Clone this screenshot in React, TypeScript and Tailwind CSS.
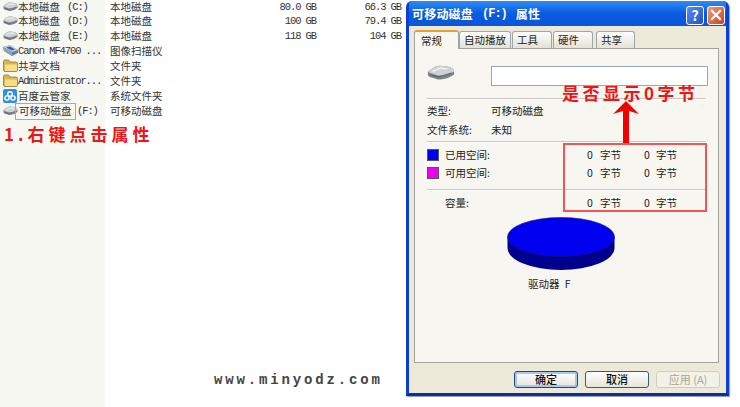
import React from "react";

const cjk = "font-['Noto_Sans_CJK_SC','Liberation_Sans',sans-serif]";
const mono = "font-['Liberation_Mono','Noto_Sans_CJK_SC',monospace]";

function DriveIcon({ w = 15, h = 10 }: { w?: number; h?: number }) {
  return (
    <svg width={w} height={h} viewBox="0 0 30 20" preserveAspectRatio="none" className="shrink-0">
      <path d="M1 8 L9 2 Q11 1 14 1 L22 2 Q29 4 29 8 L29 12 Q20 19 12 18 L3 15 Q1 14 1 12 Z" fill="#7c8186" />
      <path d="M1 8 L9 2 Q11 1 14 1 L22 2 Q29 4 29 8 Q20 14 12 13 L3 10 Z" fill="#cfd2d4" />
      <path d="M6 8 L14 4 L22 5" stroke="#f4f5f6" strokeWidth="1.5" fill="none" />
      <path d="M4 12 L12 15 L26 10" stroke="#54595d" strokeWidth="1" fill="none" />
    </svg>
  );
}

function ScannerIcon() {
  return (
    <svg width={16} height={13} viewBox="0 0 16 13" className="shrink-0">
      <path d="M0 3 L7 1 L15 6 L15 9 L9 12 L1 7 Z" fill="#5f7fa8" />
      <path d="M0 3 L7 1 L15 6 L9 8 Z" fill="#c5d3e3" />
      <path d="M3 3.5 L7 2.5 L12 5.5 L8.5 6.5 Z" fill="#3d5f96" />
      <path d="M1 7 L9 12 L9 8 L0 3 Z" fill="#8fa3bb" />
    </svg>
  );
}

function FolderIcon() {
  return (
    <svg width={15} height={13} viewBox="0 0 15 13" className="shrink-0">
      <path d="M0.5 2.5 Q0.5 1 2 1 L5.5 1 L7 3 L13 3 Q14.5 3 14.5 4.5 L14.5 11 Q14.5 12.5 13 12.5 L2 12.5 Q0.5 12.5 0.5 11 Z" fill="#d9b64e" stroke="#8f7a3a" strokeWidth="0.8" />
      <path d="M2 5.5 L14 5.5 L14 11 Q14 12 13 12 L2.5 12 Q2 12 2 11 Z" fill="#f7df8a" />
    </svg>
  );
}

function CloudIcon() {
  return (
    <svg width={14} height={14} viewBox="0 0 14 14" className="shrink-0">
      <rect width="14" height="14" rx="2" fill="#2f8fe6" />
      <circle cx="7" cy="5" r="2.3" fill="none" stroke="#fff" strokeWidth="1.4" />
      <circle cx="4" cy="9" r="2.1" fill="none" stroke="#fff" strokeWidth="1.4" />
      <circle cx="10" cy="9" r="2.1" fill="none" stroke="#fff" strokeWidth="1.4" />
    </svg>
  );
}

function Latin({ children, className = "" }: { children: React.ReactNode; className?: string }) {
  return <span className={`${mono} tracking-[-1.1px] whitespace-pre pt-[2px] ${className}`}>{children}</span>;
}

const drive = <DriveIcon />;
const rows: { icon: React.ReactNode; name: React.ReactNode; type: string; size?: string; free?: string }[] = [
  { icon: drive, name: <>本地磁盘<Latin className="ml-[7px]">(C:)</Latin></>, type: "本地磁盘", size: "80.0 GB", free: "66.3 GB" },
  { icon: drive, name: <>本地磁盘<Latin className="ml-[7px]">(D:)</Latin></>, type: "本地磁盘", size: "100 GB", free: "79.4 GB" },
  { icon: drive, name: <>本地磁盘<Latin className="ml-[7px]">(E:)</Latin></>, type: "本地磁盘", size: "118 GB", free: "104 GB" },
  { icon: <ScannerIcon />, name: <Latin>Canon MF4700 ...</Latin>, type: "图像扫描仪" },
  { icon: <FolderIcon />, name: "共享文档", type: "文件夹" },
  { icon: <FolderIcon />, name: <Latin>Administrator...</Latin>, type: "文件夹" },
  { icon: <CloudIcon />, name: "百度云管家", type: "系统文件夹" },
  {
    icon: drive,
    name: (
      <>
        <span className="border border-[#f28a80] h-[17px] w-[61px] -ml-[3px] pl-[3px] pb-[2px] mt-[2px] flex items-center shrink-0">可移动磁盘</span>
        <Latin className="ml-[1px]">(F:)</Latin>
      </>
    ),
    type: "可移动磁盘",
  },
];

function Tab({ label, width, gap = 0 }: { label: string; width: number; gap?: number }) {
  return (
    <div
      style={{ width, marginLeft: gap }}
      className="h-[17px] mt-[1px] pl-[4px] text-[10.5px] text-[#222] flex items-center bg-gradient-to-b from-[#fdfdfb] to-[#e4e1d5] border border-b-0 border-[#9aa5ae] rounded-t-[3px]"
    >
      {label}
    </div>
  );
}

function Divider({ className = "" }: { className?: string }) {
  return <div className={`h-[2px] mr-[2px] bg-[#c9c8c2] border-b border-white ${className}`} />;
}

function Bytes() {
  return (
    <div className="flex w-[90px] ml-auto text-[10.5px] text-[#222] leading-none">
      <div className="w-[57px] flex justify-start gap-[7px]">
        <span className="w-[6px] text-center">0</span>
        <span>字节</span>
      </div>
      <div className="flex gap-[6px]">
        <span className="w-[6px] text-center">0</span>
        <span>字节</span>
      </div>
    </div>
  );
}

function Usage({ color, label }: { color?: string; label: string }) {
  return (
    <div className="h-[18px] flex items-center pr-[31px]">
      <div className="w-[18px] shrink-0">
        {color && <div className={`w-[12px] h-[12px] border border-[#555] ${color}`} />}
      </div>
      <span className="text-[10.5px] text-[#222]">{label}</span>
      <Bytes />
    </div>
  );
}

function DlgButton({ label, tone }: { label: string; tone: "default" | "normal" | "disabled" }) {
  const cls =
    tone === "default"
      ? "border-[#20497a] text-[#111] font-medium bg-gradient-to-b from-white to-[#e6e4da] shadow-[inset_0_0_0_2px_#a9c8ef]"
      : tone === "normal"
      ? "border-[#3c5a70] text-[#111] font-medium bg-gradient-to-b from-white to-[#e6e4da]"
      : "border-[#cfcdc0] text-[#a8a698] bg-[#f3f1e8]";
  return (
    <div className={`w-[64px] h-[17px] rounded-[3px] border flex items-center justify-center text-[11px] ${cls}`}>
      {label}
    </div>
  );
}

export default function App() {
  return (
    <div className={`relative flex w-[740px] h-[407px] bg-white overflow-hidden ${cjk}`}>
      <div className="w-[105px] h-full bg-[#f8f8f2] shrink-0">
        {rows.map((r, i) => (
          <div key={i} className="h-[15px] flex items-center text-[10.5px] leading-[11px] text-[#333] whitespace-nowrap pl-[3px] first:h-[13px] overflow-visible">
            <div className="w-[15px] shrink-0 flex items-center">{r.icon}</div>
            <div className="flex items-center">{r.name}</div>
          </div>
        ))}
        <div className="pt-[4px] pl-[4px] text-[17px] leading-[24px] font-bold text-[#f01414] tracking-[4px] whitespace-nowrap">
          1.右键点击属性
        </div>
      </div>

      <div className="w-[301px] h-full shrink-0 flex flex-col">
        {rows.map((r, i) => (
          <div key={i} className="h-[15px] first:h-[13px] grid grid-cols-[106px_105px_85px] items-center text-[10.5px] leading-[11px] text-[#333]">
            <span className="pl-[5px]">{r.type}</span>
            <Latin className="text-right">{r.size ?? ""}</Latin>
            <Latin className="text-right">{r.free ?? ""}</Latin>
          </div>
        ))}
        <div className={`mt-auto pl-[109px] pb-[17px] text-[14px] leading-[20px] font-bold text-[#444] tracking-[2.85px] ${mono}`}>
          www.minyodz.com
        </div>
      </div>

      <div className="w-[323px] h-[395px] mt-[1px] shrink-0 rounded-t-[6px] bg-gradient-to-b from-[#0a5fe0] to-[#0838c8] border-x-[3px] border-b-[3px] border-x-[#0a3fcf] border-b-[#0a2da8] flex flex-col shadow-[1px_1px_1px_#999]">
        <div className="h-[25px] shrink-0 flex items-center pl-[3px] pr-[1px] bg-gradient-to-b from-[#2f8bf5] via-[#0a5be0] to-[#0a56d8] rounded-t-[4px]">
          <div className="flex items-center text-[12px] font-bold text-white tracking-[0.2px]">
            <span>可移动磁盘</span>
            <span className={`mx-[9px] tracking-[-1px] ${mono}`}>(F:)</span>
            <span>属性</span>
          </div>
          <div className="ml-auto flex gap-[3px] pt-[3px]">
            <div className="w-[18px] h-[19px] rounded-[3px] border border-white bg-gradient-to-br from-[#5d8df0] to-[#1f4fc8] flex items-center justify-center text-white font-bold text-[14px] leading-none">?</div>
            <div className="w-[18px] h-[19px] rounded-[3px] border border-white bg-gradient-to-br from-[#f09a78] to-[#c9401c] flex items-center justify-center">
              <svg width="12" height="12" viewBox="0 0 12 12">
                <path d="M2 2 L10 10 M10 2 L2 10" stroke="#fff" strokeWidth="2.2" strokeLinecap="square" />
              </svg>
            </div>
          </div>
        </div>

        <div className="flex-1 bg-[#ece9d8] pt-[4px] px-[5px] flex flex-col min-h-0">
          <div className="flex h-[18px] items-end relative z-10">
            <div className="w-[45px] h-[19px] -mb-[1px] pl-[6px] text-[10.5px] text-[#222] flex items-center bg-[#f8f7f2] border border-b-0 border-[#9aa5ae] border-t-2 border-t-[#e8a02c] rounded-t-[3px]">常规</div>
            <Tab label="自动播放" width={52} />
            <Tab label="工具" width={40} gap={1} />
            <Tab label="硬件" width={40} gap={1} />
            <Tab label="共享" width={39} gap={3} />
          </div>
          <div className="w-[305px] h-[315px] bg-[#f7f6f1] border border-[#a0a29c] flex flex-col pl-[12px] pr-[10px] shrink-0">
            <div className="flex items-start pt-[16px] h-[49px] shrink-0">
              <div className="w-[64px] shrink-0"><DriveIcon w={28} h={16} /></div>
              <div className="w-[217px] h-[20px] mt-[1px] shrink-0 bg-white border border-[#9aa5bd]" />
            </div>
            <Divider />
            <div className="pt-[1px]">
              <div className="h-[19px] flex items-center text-[10.5px] text-[#222]">
                <span className="w-[64px]">类型:</span>
                <span>可移动磁盘</span>
              </div>
              <div className="h-[19px] flex items-center text-[10.5px] text-[#222]">
                <span className="w-[64px]">文件系统:</span>
                <span>未知</span>
              </div>
            </div>
            <Divider className="mt-[2px]" />
            <div className="pt-[3px]">
              <Usage color="bg-[#0000f0]" label="已用空间:" />
              <Usage color="bg-[#f000f0]" label="可用空间:" />
            </div>
            <Divider className="mt-[7px]" />
            <div className="pt-[3px]">
              <Usage label="容量:" />
            </div>
            <div className="pt-[5px] pl-[80px]">
              <svg width="108" height="54" viewBox="0 0 108 54" className="block">
                <path d="M0.5 20 L0.5 31 A53.5 22 0 0 0 107.5 31 L107.5 20 Z" fill="#00008c" />
                <ellipse cx="54" cy="20" rx="53.5" ry="19.5" fill="#0000f0" stroke="#1a1a70" strokeWidth="0.6" />
              </svg>
            </div>
            <div className="pl-[101px] text-[10.5px] text-[#222] pt-[5px] leading-[16px] [word-spacing:3px]">驱动器 F</div>
          </div>
          <div className="flex justify-end gap-[7px] pt-[8px] w-[306px]">
            <DlgButton label="确定" tone="default" />
            <DlgButton label="取消" tone="normal" />
            <DlgButton label="应用 (A)" tone="disabled" />
          </div>
        </div>
      </div>

      <div className="absolute left-[563px] top-[143px] w-[144px] h-[69px] border-2 border-[#f25555]" />
      <svg className="absolute left-[611px] top-[101px]" width="30" height="42" viewBox="0 0 30 42">
        <path d="M15 0 L28 13 L18 10 L18 42 L12 42 L12 10 L2 13 Z" fill="#f00000" />
      </svg>
      <div className="absolute left-[562px] top-[81px] text-[17px] leading-[24px] font-bold text-[#f01414] tracking-[3.5px] whitespace-nowrap">
        是否显示0字节
      </div>
    </div>
  );
}
